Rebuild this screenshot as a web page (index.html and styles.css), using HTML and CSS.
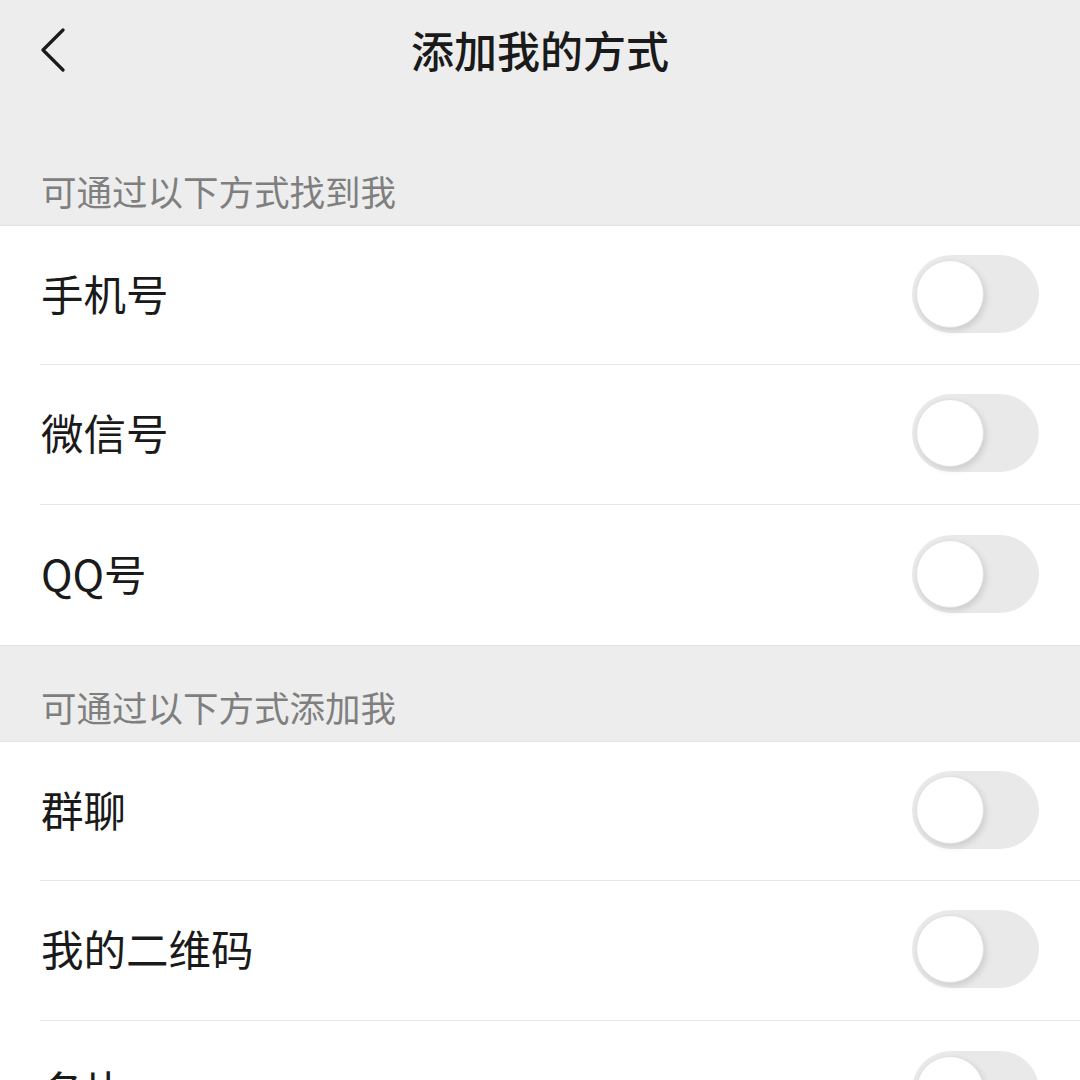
FILE: index.html
```html
<!DOCTYPE html>
<html lang="zh-CN">
<head>
    <meta charset="UTF-8">
    <meta name="viewport" content="width=device-width, initial-scale=1.0">
    <title>添加我的方式</title>
    <link rel="stylesheet" href="styles.css">
</head>
<body>
    <header class="nav-bar">
        <span class="nav-back">
            <svg width="30" height="48" viewBox="0 0 30 48">
                <path d="M23 6 L3 26 L23 46" fill="none" stroke="#1a1a1a" stroke-width="3.2" stroke-linecap="round" stroke-linejoin="round"/>
            </svg>
        </span>
        <h1 class="nav-title">添加我的方式</h1>
    </header>

    <main>
        <div class="group-label first">可通过以下方式找到我</div>
        <section class="group">
            <div class="cell">
                <span class="cell-text">手机号</span>
                <span class="switch"><span class="knob"></span></span>
            </div>
            <div class="cell">
                <span class="cell-text">微信号</span>
                <span class="switch"><span class="knob"></span></span>
            </div>
            <div class="cell last">
                <span class="cell-text">QQ号</span>
                <span class="switch"><span class="knob"></span></span>
            </div>
        </section>

        <div class="group-label">可通过以下方式添加我</div>
        <section class="group">
            <div class="cell">
                <span class="cell-text">群聊</span>
                <span class="switch"><span class="knob"></span></span>
            </div>
            <div class="cell">
                <span class="cell-text">我的二维码</span>
                <span class="switch"><span class="knob"></span></span>
            </div>
            <div class="cell last">
                <span class="cell-text">名片</span>
                <span class="switch"><span class="knob"></span></span>
            </div>
        </section>
    </main>
</body>
</html>
```

FILE: styles.css
```css
* {
    box-sizing: border-box;
    margin: 0;
    padding: 0;
}

body {
    font-family: "Noto Sans CJK SC", "Noto Sans", sans-serif;
    background-color: #ededed;
    color: #1a1a1a;
    overflow: hidden;
}

.nav-bar {
    position: relative;
    height: 104px;
    display: flex;
    align-items: center;
    justify-content: center;
}

.nav-back {
    position: absolute;
    left: 40px;
    top: 24px;
}

.nav-title {
    font-size: 43px;
    font-weight: 500;
    line-height: 56px;
    margin-top: -6px;
}

.group-label {
    font-size: 35.5px;
    line-height: 48px;
    color: #7f7f7f;
    padding: 37px 40px 10px 41px;
    border-top: 1px solid #e2e2e2;
}

.group-label.first {
    padding-top: 63px;
    border-top: none;
}

.group {
    background-color: #fff;
    border-top: 1px solid #e2e2e2;
}

.cell {
    height: 140px;
    margin-left: 40px;
    padding-right: 41px;
    display: flex;
    align-items: center;
    justify-content: space-between;
    border-bottom: 1px solid #e6e6e6;
}

.group .cell:first-child {
    height: 139px;
}

.cell.last {
    border-bottom: none;
}

.cell-text {
    font-size: 42.5px;
    line-height: 56px;
    padding-left: 1px;
    margin-top: -5px;
}

.switch {
    position: relative;
    width: 127px;
    height: 78px;
    border-radius: 39px;
    background-color: #e9e9ea;
    margin-top: -3px;
}

.knob {
    position: absolute;
    left: 4px;
    top: 5px;
    width: 68px;
    height: 68px;
    border-radius: 50%;
    background-color: #fff;
    border: 1px solid #e0e0e0;
    box-shadow: 2px 3px 6px rgba(0, 0, 0, 0.12);
}
```
